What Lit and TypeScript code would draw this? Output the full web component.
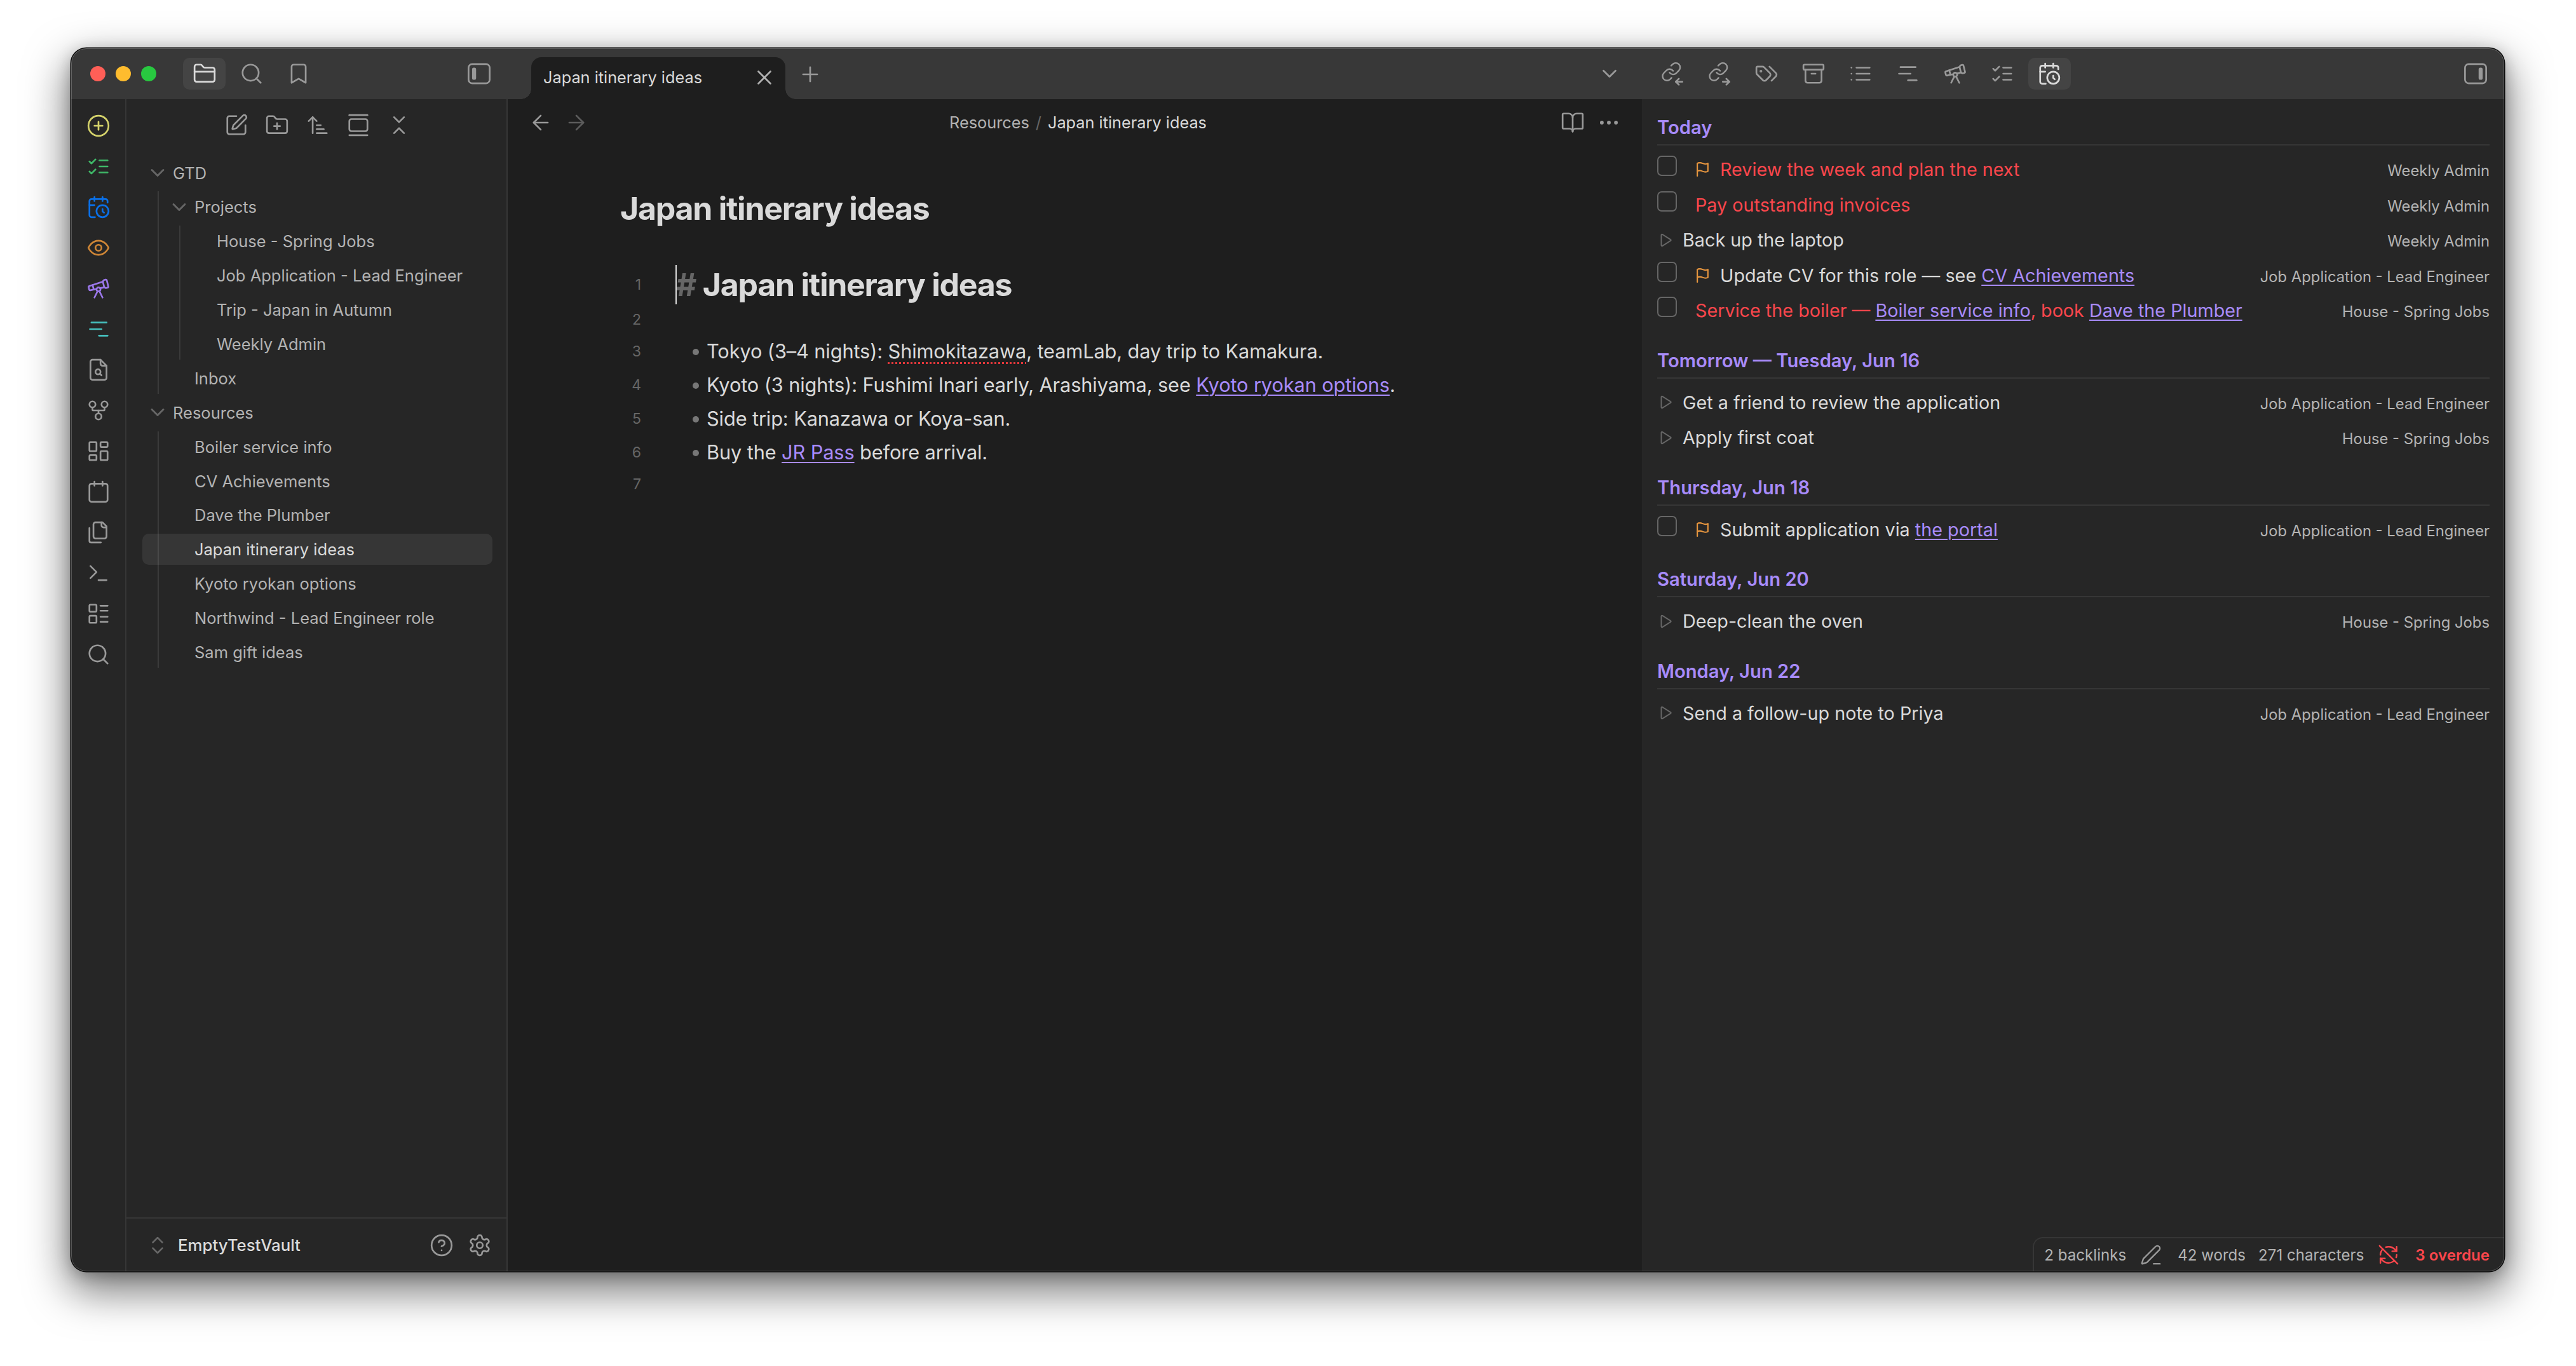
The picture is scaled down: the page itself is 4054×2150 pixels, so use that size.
import { LitElement, html, css, svg } from "lit";
import { customElement } from "lit/decorators.js";

const ICONS: Record<string, any> = {
  folder: svg`<path d="M20 20a2 2 0 0 0 2-2V8a2 2 0 0 0-2-2h-7.9a2 2 0 0 1-1.69-.9L9.6 3.9A2 2 0 0 0 7.93 3H4a2 2 0 0 0-2 2v13a2 2 0 0 0 2 2Z"/><path d="M2 10h20"/>`,
  search: svg`<circle cx="11" cy="11" r="8"/><path d="m21 21-4.3-4.3"/>`,
  bookmark: svg`<path d="m19 21-7-4-7 4V5a2 2 0 0 1 2-2h10a2 2 0 0 1 2 2v16z"/>`,
  sideLeft: svg`<rect x="1.500" y="2.500" width="21" height="19" rx="3.500"/><rect x="5" y="6" width="4" height="12" rx="1.600" fill="currentColor" stroke="none"/>`,
  sideRight: svg`<rect x="1.500" y="2.500" width="21" height="19" rx="3.500"/><rect x="15" y="6" width="4" height="12" rx="1.600" fill="currentColor" stroke="none"/>`,
  edit: svg`<path d="M12 3H5a2 2 0 0 0-2 2v14a2 2 0 0 0 2 2h14a2 2 0 0 0 2-2v-7"/><path d="M18.375 2.625a1 1 0 0 1 3 3l-9.013 9.014a2 2 0 0 1-.853.505l-2.873.84a.5.5 0 0 1-.62-.62l.84-2.873a2 2 0 0 1 .506-.852z"/>`,
  folderPlus: svg`<path d="M12 10v6"/><path d="M9 13h6"/><path d="M20 20a2 2 0 0 0 2-2V8a2 2 0 0 0-2-2h-7.9a2 2 0 0 1-1.69-.9L9.6 3.9A2 2 0 0 0 7.93 3H4a2 2 0 0 0-2 2v13a2 2 0 0 0 2 2Z"/>`,
  sort: svg`<path d="m3 8 4-4 4 4"/><path d="M7 4v16"/><path d="M11 12h4"/><path d="M11 16h7"/><path d="M11 20h10"/>`,
  gallery: svg`<path d="M3 2h18"/><rect width="18" height="12" x="3" y="6" rx="2"/><path d="M3 22h18"/>`,
  collapse: svg`<path d="m7 20 5-5 5 5"/><path d="m7 4 5 5 5-5"/>`,
  circlePlus: svg`<circle cx="12" cy="12" r="10"/><path d="M8 12h8"/><path d="M12 8v8"/>`,
  listChecks: svg`<path d="m3 17 2 2 4-4"/><path d="m3 7 2 2 4-4"/><path d="M13 6h8"/><path d="M13 12h8"/><path d="M13 18h8"/>`,
  calClock: svg`<path d="M21 7.5V6a2 2 0 0 0-2-2H5a2 2 0 0 0-2 2v14a2 2 0 0 0 2 2h3.5"/><path d="M16 2v4"/><path d="M8 2v4"/><path d="M3 10h5"/><path d="M17.5 17.5 16 16.3V14"/><circle cx="16" cy="16" r="6"/>`,
  eye: svg`<path d="M2 12s3-7 10-7 10 7 10 7-3 7-10 7-10-7-10-7Z"/><circle cx="12" cy="12" r="3"/>`,
  telescope: svg`<path d="m10.065 12.493-6.18 1.318a.934.934 0 0 1-1.108-.702l-.537-2.15a1.07 1.07 0 0 1 .691-1.265l13.504-4.44"/><path d="m13.56 11.747 4.332-.924"/><path d="m16 21-3.105-6.21"/><path d="M16.485 5.94a2 2 0 0 1 1.455-2.425l1.09-.272a1 1 0 0 1 1.212.727l1.515 6.06a1 1 0 0 1-.727 1.213l-1.09.272a2 2 0 0 1-2.425-1.455z"/><path d="m6.158 8.633 1.114 4.456"/><path d="m8 21 3.105-6.21"/><circle cx="12" cy="13" r="2"/>`,
  outline: svg`<path d="M5 5.5h15"/><path d="M3.5 12H15"/><path d="M12.500 18.500H21"/>`,
  fileSearch: svg`<path d="M6 22a2 2 0 0 1-2-2V4a2 2 0 0 1 2-2h8l6 6v12a2 2 0 0 1-2 2Z"/><path d="M14 2v4a2 2 0 0 0 2 2h4"/><circle cx="11.500" cy="14" r="2.500"/><path d="m13.500 16 1.500 1.500"/>`,
  fork: svg`<circle cx="12" cy="18" r="3"/><circle cx="6" cy="6" r="3"/><circle cx="18" cy="6" r="3"/><path d="M18 9v2c0 .6-.4 1-1 1H7c-.6 0-1-.4-1-1V9"/><path d="M12 12v3"/>`,
  dashboard: svg`<rect width="7" height="9" x="3" y="3" rx="1"/><rect width="7" height="5" x="14" y="3" rx="1"/><rect width="7" height="9" x="14" y="12" rx="1"/><rect width="7" height="5" x="3" y="16" rx="1"/>`,
  calendar: svg`<path d="M8 2v4"/><path d="M16 2v4"/><rect width="18" height="18" x="3" y="4" rx="2"/>`,
  files: svg`<path d="M20 7h-3a2 2 0 0 1-2-2V2"/><path d="M9 18a2 2 0 0 1-2-2V4a2 2 0 0 1 2-2h7l4 4v10a2 2 0 0 1-2 2Z"/><path d="M3 7.600v12.800A1.600 1.600 0 0 0 4.600 22h9.800"/>`,
  terminal: svg`<path d="M12 19h8"/><path d="m4 17 6-6-6-6"/>`,
  layoutList: svg`<rect width="7" height="7" x="3" y="3" rx="1"/><rect width="7" height="7" x="3" y="14" rx="1"/><path d="M14 4h7"/><path d="M14 9h7"/><path d="M14 15h7"/><path d="M14 20h7"/>`,
  chevron: svg`<path d="m6 9 6 6 6-6"/>`,
  x: svg`<path d="M18 6 6 18"/><path d="m6 6 12 12"/>`,
  plus: svg`<path d="M5 12h14"/><path d="M12 5v14"/>`,
  back: svg`<path d="m12 19-7-7 7-7"/><path d="M19 12H5"/>`,
  forward: svg`<path d="M5 12h14"/><path d="m12 5 7 7-7 7"/>`,
  book: svg`<path d="M12 7v14"/><path d="M3 18a1 1 0 0 1-1-1V4a1 1 0 0 1 1-1h5a4 4 0 0 1 4 4 4 4 0 0 1 4-4h5a1 1 0 0 1 1 1v13a1 1 0 0 1-1 1h-6a3 3 0 0 0-3 3 3 3 0 0 0-3-3z"/>`,
  more: svg`<circle cx="12" cy="12" r="1" fill="currentColor"/><circle cx="19" cy="12" r="1" fill="currentColor"/><circle cx="5" cy="12" r="1" fill="currentColor"/>`,
  linkIn: svg`<g transform="translate(1 -.5) scale(.88)"><path d="M10 13a5 5 0 0 0 7.540.540l3-3a5 5 0 0 0-7.070-7.070l-1.720 1.710"/><path d="M14 11a5 5 0 0 0-7.540-.540l-3 3a5 5 0 0 0 7.070 7.070l1.710-1.710"/></g><path d="M22.500 20h-6.500"/><path d="m19 17-3 3 3 3"/>`,
  linkOut: svg`<g transform="translate(1 -.5) scale(.88)"><path d="M10 13a5 5 0 0 0 7.540.540l3-3a5 5 0 0 0-7.070-7.070l-1.720 1.710"/><path d="M14 11a5 5 0 0 0-7.540-.540l-3 3a5 5 0 0 0 7.070 7.070l1.710-1.710"/></g><path d="M16 20h6.500"/><path d="m19.500 17 3 3-3 3"/>`,
  tags: svg`<path d="m15 5 6.300 6.300a2.400 2.400 0 0 1 0 3.400L17 19"/><path d="M9.586 5.586A2 2 0 0 0 8.172 5H3a1 1 0 0 0-1 1v5.172a2 2 0 0 0 .586 1.414L8.290 18.290a2.426 2.426 0 0 0 3.420 0l3.580-3.580a2.426 2.426 0 0 0 0-3.420z"/><circle cx="6.500" cy="9.500" r=".5" fill="currentColor"/>`,
  archive: svg`<rect width="20" height="5" x="2" y="3" rx="1"/><path d="M4 8v11a2 2 0 0 0 2 2h12a2 2 0 0 0 2-2V8"/><path d="M10 12h4"/>`,
  list: svg`<path d="M3 12h.01"/><path d="M3 18h.01"/><path d="M3 6h.01"/><path d="M8 12h13"/><path d="M8 18h13"/><path d="M8 6h13"/>`,
  help: svg`<circle cx="12" cy="12" r="10"/><path d="M9.090 9a3 3 0 0 1 5.830 1c0 2-3 3-3 3"/><path d="M12 17h.01"/>`,
  gear: svg`<path d="M12.220 2h-.44a2 2 0 0 0-2 2v.18a2 2 0 0 1-1 1.730l-.43.25a2 2 0 0 1-2 0l-.15-.08a2 2 0 0 0-2.730.73l-.22.38a2 2 0 0 0 .73 2.730l.15.1a2 2 0 0 1 1 1.720v.51a2 2 0 0 1-1 1.740l-.15.09a2 2 0 0 0-.73 2.730l.22.38a2 2 0 0 0 2.730.73l.15-.08a2 2 0 0 1 2 0l.43.25a2 2 0 0 1 1 1.730V20a2 2 0 0 0 2 2h.44a2 2 0 0 0 2-2v-.18a2 2 0 0 1 1-1.730l.43-.25a2 2 0 0 1 2 0l.15.08a2 2 0 0 0 2.730-.73l.22-.39a2 2 0 0 0-.73-2.730l-.15-.08a2 2 0 0 1-1-1.740v-.5a2 2 0 0 1 1-1.740l.15-.09a2 2 0 0 0 .73-2.730l-.22-.38a2 2 0 0 0-2.730-.73l-.15.08a2 2 0 0 1-2 0l-.43-.25a2 2 0 0 1-1-1.730V4a2 2 0 0 0-2-2z"/><circle cx="12" cy="12" r="3"/>`,
  upDown: svg`<path d="m7 15 5 5 5-5"/><path d="m7 9 5-5 5 5"/>`,
  pencil: svg`<path d="M21.174 6.812a1 1 0 0 0-3.986-3.987L3.842 16.174a2 2 0 0 0-.5.830l-1.321 4.352a.5.5 0 0 0 .623.622l4.353-1.320a2 2 0 0 0 .830-.497z"/><path d="M15 22h7"/>`,
  syncOff: svg`<path d="M21 8L18.740 5.740A9.750 9.750 0 0 0 12 3C11 3 10.030 3.160 9.130 3.470"/><path d="M8 16H3v5"/><path d="M3 12C3 9.510 4 7.260 5.640 5.640"/><path d="m3 16 2.260 2.260A9.750 9.750 0 0 0 12 21c2.490 0 4.740-1 6.360-2.640"/><path d="M21 12c0 1-.16 1.970-.47 2.870"/><path d="M21 3v5h-5"/><path d="M22 22 2 2"/>`,
  flag: svg`<path d="M4 15s1-1 4-1 5 2 8 2 4-1 4-1V3s-1 1-4 1-5-2-8-2-4 1-4 1z"/><path d="M4 22v-7"/>`,
  play: svg`<path d="M6 4.500a1 1 0 0 1 1.500-.87l12 7.500a1 1 0 0 1 0 1.740l-12 7.500A1 1 0 0 1 6 19.500z"/>`,
};

const icon = (name: string, cls = "") =>
  html`<svg class="i ${cls}" viewBox="0 0 24 24" aria-hidden="true">${ICONS[name]}</svg>`;

type Part = string | { link: string };
interface Task { kind: "box" | "play"; flag?: boolean; red?: boolean; parts: Part[]; meta: string; }
interface Section { head: string; tasks: Task[]; }

const JOB = "Job Application - Lead Engineer";
const HOUSE = "House - Spring Jobs";
const ADMIN = "Weekly Admin";

const SECTIONS: Section[] = [
  { head: "Today", tasks: [
    { kind: "box", flag: true, red: true, parts: ["Review the week and plan the next"], meta: ADMIN },
    { kind: "box", red: true, parts: ["Pay outstanding invoices"], meta: ADMIN },
    { kind: "play", parts: ["Back up the laptop"], meta: ADMIN },
    { kind: "box", flag: true, parts: ["Update CV for this role — see ", { link: "CV Achievements" }], meta: JOB },
    { kind: "box", red: true, parts: ["Service the boiler — ", { link: "Boiler service info" }, ", book ", { link: "Dave the Plumber" }], meta: HOUSE },
  ]},
  { head: "Tomorrow — Tuesday, Jun 16", tasks: [
    { kind: "play", parts: ["Get a friend to review the application"], meta: JOB },
    { kind: "play", parts: ["Apply first coat"], meta: HOUSE },
  ]},
  { head: "Thursday, Jun 18", tasks: [
    { kind: "box", flag: true, parts: ["Submit application via ", { link: "the portal" }], meta: JOB },
  ]},
  { head: "Saturday, Jun 20", tasks: [
    { kind: "play", parts: ["Deep-clean the oven"], meta: HOUSE },
  ]},
  { head: "Monday, Jun 22", tasks: [
    { kind: "play", parts: ["Send a follow-up note to Priya"], meta: JOB },
  ]},
];

const RIBBON: [string, string][] = [
  ["circlePlus", "yellow"], ["listChecks", "green"], ["calClock", "blue"], ["eye", "orange"],
  ["telescope", "purple"], ["outline", "cyan"], ["fileSearch", ""], ["fork", ""], ["dashboard", ""],
  ["calendar", ""], ["files", ""], ["terminal", ""], ["layoutList", ""], ["search", ""],
];

const RIGHT_ICONS = ["linkIn", "linkOut", "tags", "archive", "list", "outline", "telescope", "listChecks", "calClock"];

@customElement("app-root")
export class AppRoot extends LitElement {
  static styles = css`
    :host {
      display: block;
      width: 4054px;
      height: 2150px;
      box-sizing: border-box;
      padding: 76px 113px 149px 112px;
      background: #fff;
      font-family: Inter, "Liberation Sans", sans-serif;
      color: #dadada;
    }
    * { box-sizing: border-box; }
    .window {
      position: relative;
      width: 3829px;
      height: 1925px;
      border-radius: 24px;
      overflow: hidden;
      background: #262626;
      display: flex;
      flex-direction: column;
      box-shadow: 0 0 0 1.5px #0c0c0c, 0 26px 66px 6px rgba(0, 0, 0, 0.52), 0 6px 24px rgba(0, 0, 0, 0.25);
    }
    .window::after {
      content: "";
      position: absolute;
      inset: 0;
      border-radius: 24px;
      border: 1.5px solid rgba(255, 255, 255, 0.22);
      pointer-events: none;
    }
    .i {
      width: 38px;
      height: 38px;
      fill: none;
      stroke: currentColor;
      stroke-width: 1.7;
      stroke-linecap: round;
      stroke-linejoin: round;
      flex: none;
      display: block;
    }
    .btn {
      width: 67px;
      height: 50px;
      border-radius: 10px;
      display: flex;
      align-items: center;
      justify-content: center;
      color: #999;
      flex: none;
    }
    .btn.on { background: #444; color: #dadada; }

    /* title bar */
    .titlebar {
      height: 80px;
      flex: none;
      background: #383838;
      display: grid;
      grid-template-columns: 724px 1748px 1357px;
    }
    .tb-left { display: flex; align-items: center; padding-left: 30px; }
    .lights { display: flex; gap: 16px; margin-right: 42px; }
    .light { width: 24px; height: 24px; border-radius: 50%; }
    .red { background: #ff5f57; }
    .amber { background: #febc2e; }
    .grn { background: #28c840; }
    .tab-btns { display: flex; gap: 7px; margin-right: 217px; }
    .tb-mid { display: flex; align-items: flex-end; }
    .tab {
      position: relative;
      width: 400px;
      height: 66px;
      background: #1e1e1e;
      border-radius: 16px 16px 0 0;
      display: flex;
      align-items: center;
      padding: 0 14px 3px 19px;
      font-size: 25.3px;
      color: #dadada;
    }
    .tab::before, .tab::after {
      content: "";
      position: absolute;
      bottom: 0;
      width: 16px;
      height: 16px;
    }
    .tab::before { left: -16px; background: radial-gradient(circle at 0 0, transparent 15.5px, #1e1e1e 16px); }
    .tab::after { right: -16px; background: radial-gradient(circle at 100% 0, transparent 15.5px, #1e1e1e 16px); }
    .tab span { flex: 1; }
    .tab .i { color: #b3b3b3; }
    .plus { align-self: center; margin-left: 5px; margin-top: 2px; }
    .chev { align-self: center; margin-left: auto; margin-right: 18px; }
    .tb-right { display: flex; align-items: center; gap: 7.3px; padding: 0 11.5px 0 13.5px; }
    .tb-right .last { margin-left: auto; }

    /* body */
    .body {
      flex: 1;
      min-height: 0;
      display: grid;
      grid-template-columns: 87px 600px 1785px 1357px;
    }
    .ribbon {
      background: #262626;
      border-right: 2px solid #363636;
      display: flex;
      flex-direction: column;
      align-items: center;
      gap: 26px;
      padding-top: 23px;
      color: #999;
    }
    .yellow { color: #d5d36b; }
    .green { color: #3fb868; }
    .blue { color: #0a70e8; }
    .orange { color: #cf8636; }
    .purple { color: #9a77e8; }
    .cyan { color: #46bfbd; }

    /* sidebar */
    .sidebar {
      background: #262626;
      border-right: 2px solid #363636;
      display: flex;
      flex-direction: column;
      min-height: 0;
    }
    .side-head {
      height: 91.5px;
      flex: none;
      display: flex;
      justify-content: center;
      gap: 14px;
      padding: 16px 0 0 3px;
    }
    .side-head .btn { width: 50px; }
    .tree {
      flex: 1;
      display: flex;
      flex-direction: column;
      gap: 4.9px;
      padding: 0 22px 0 25px;
      font-size: 25.5px;
      color: #b3b3b3;
    }
    .children { position: relative; display: flex; flex-direction: column; gap: 4.9px; }
    .children::before {
      content: "";
      position: absolute;
      top: 0;
      bottom: 0;
      left: 24px;
      width: 2px;
      background: #3a3a3a;
    }
    .children.deep::before { left: 58px; }
    .row {
      position: relative;
      height: 49px;
      border-radius: 10px;
      display: flex;
      align-items: center;
    }
    .d0 { padding-left: 48px; }
    .d1 { padding-left: 82px; }
    .d2 { padding-left: 117px; }
    .row.active { background: rgba(255, 255, 255, 0.075); color: #dadada; }
    .row .i {
      position: absolute;
      color: #666;
      width: 36px;
      height: 36px;
      stroke-width: 1.9;
    }
    .row.d0 .i { left: 6px; }
    .row.d1 .i { left: 40px; }
    .vault {
      height: 85px;
      flex: none;
      border-top: 2px solid #363636;
      display: flex;
      align-items: center;
      color: #999;
      padding-right: 23px;
    }
    .vault .up { width: 36px; height: 36px; color: #666; margin-left: 31px; }
    .vault b { font-weight: 500; font-size: 25.8px; color: #dadada; margin-left: 14px; flex: 1; }
    .vault .i + b + .i { margin-right: 22px; }

    /* editor */
    .editor { background: #1e1e1e; min-width: 0; }
    .nav {
      height: 74px;
      display: grid;
      grid-template-columns: 1fr auto 1fr;
      align-items: center;
      padding: 0 33px;
    }
    .nav-l, .nav-r { display: flex; align-items: center; }
    .nav-l { gap: 18px; color: #999; }
    .nav-l .dim { color: #5c5c5c; }
    .nav-r { justify-content: flex-end; gap: 19px; color: #999; }
    .crumbs { font-size: 25.3px; color: #b3b3b3; display: flex; gap: 10px; padding: 0 0 2px 10px; }
    .crumbs i { font-style: normal; color: #666; }
    .crumbs span:last-child { color: #dadada; }
    .title {
      height: 60px;
      margin: 68px 0 59px 177px;
      font-size: 50px;
      line-height: 60px;
      font-weight: 700;
      letter-spacing: -0.025em;
      color: #dadada;
    }
    .line { position: relative; display: flex; align-items: center; font-size: 30.75px; height: 53px; }
    .line.blank { height: 47px; }
    .line.h1 { height: 62px; }
    .num { width: 210px; text-align: right; font-size: 23px; color: #666; flex: none; }
    .txt { margin-left: 55px; white-space: pre; letter-spacing: -0.004em; }
    .h1 .txt { font-size: 50px; font-weight: 700; letter-spacing: -0.025em; }
    .hash { color: #666; }
    .caret {
      position: absolute;
      left: 264px;
      top: 0;
      width: 2px;
      height: 62px;
      background: #dadada;
    }
    .bullet {
      display: inline-block;
      width: 10px;
      height: 10px;
      border-radius: 50%;
      background: #777;
      margin: 0 12px 5px 26px;
    }
    a { color: #a88bfa; text-decoration: underline; text-decoration-thickness: 2px; text-underline-offset: 4px; }
    .spell { text-decoration: underline dotted #e5383b 3px; text-underline-offset: 6px; }

    /* right panel */
    .right { position: relative; background: #262626; padding: 0 23px 0 24px; min-width: 0; }
    .sec { padding-top: 32px; }
    .sec:first-child { padding-top: 26px; }
    .sec h3 {
      margin: 0 0 10px;
      height: 47px;
      padding-bottom: 7px;
      border-bottom: 2px solid #363636;
      font-size: 29.2px;
      line-height: 38px;
      font-weight: 600;
      color: #a88bfa;
    }
    .task { height: 55.5px; display: flex; align-items: center; font-size: 28.75px; }
    .task.late { color: #fb464c; }
    .check {
      width: 31px;
      height: 32px;
      border: 2px solid #666;
      border-radius: 7px;
      align-self: flex-start;
      margin: 6px 29px 0 0;
      flex: none;
    }
    .flag { width: 25px; height: 25px; stroke-width: 2; color: #e9973f; margin: 0 15px 0 -1px; }
    .tri { width: 26px; height: 26px; stroke-width: 1.8; color: #666; margin: 0 14px 0 0; }
    .meta { margin-left: auto; font-size: 23.8px; color: #b3b3b3; padding-top: 4px; }
    .status {
      position: absolute;
      right: 0;
      bottom: 0;
      height: 54px;
      display: flex;
      align-items: center;
      background: #262626;
      border: solid #363636;
      border-width: 2px 0 0 2px;
      border-top-left-radius: 16px;
      padding: 0 23px 0 16px;
      font-size: 24.1px;
      color: #b3b3b3;
    }
    .status .i { width: 34px; height: 34px; }
    .status .pen { color: #999; margin: 0 25px 0 22px; }
    .status .off { color: #fb464c; margin: 0 25px 0 22px; }
    .status .gap { margin-left: 20px; }
    .status b { font-weight: 600; color: #fb464c; }
  `;

  private treeRow(text: string, depth: number, folder = false, active = false) {
    return html`<div class="row d${depth} ${active ? "active" : ""}">
      ${folder ? icon("chevron") : ""}${text}
    </div>`;
  }

  private renderTask(t: Task) {
    return html`<div class="task ${t.red ? "late" : ""}">
      ${t.kind === "box" ? html`<div class="check"></div>` : icon("play", "tri")}
      ${t.flag ? icon("flag", "flag") : ""}
      <span>${t.parts.map((p) => (typeof p === "string" ? p : html`<a>${p.link}</a>`))}</span>
      <span class="meta">${t.meta}</span>
    </div>`;
  }

  render() {
    return html`<div class="window">
      <div class="titlebar">
        <div class="tb-left">
          <div class="lights">
            <div class="light red"></div><div class="light amber"></div><div class="light grn"></div>
          </div>
          <div class="tab-btns">
            <div class="btn on">${icon("folder")}</div>
            <div class="btn">${icon("search")}</div>
            <div class="btn">${icon("bookmark")}</div>
          </div>
          <div class="btn">${icon("sideLeft")}</div>
        </div>
        <div class="tb-mid">
          <div class="tab"><span>Japan itinerary ideas</span>${icon("x")}</div>
          <div class="btn plus">${icon("plus")}</div>
          <div class="btn chev">${icon("chevron")}</div>
        </div>
        <div class="tb-right">
          ${RIGHT_ICONS.map((n, i) => html`<div class="btn ${i === 8 ? "on" : ""}">${icon(n)}</div>`)}
          <div class="btn last">${icon("sideRight")}</div>
        </div>
      </div>

      <div class="body">
        <div class="ribbon">${RIBBON.map(([n, c]) => icon(n, c))}</div>

        <div class="sidebar">
          <div class="side-head">
            ${["edit", "folderPlus", "sort", "gallery", "collapse"].map((n) => html`<div class="btn">${icon(n)}</div>`)}
          </div>
          <div class="tree">
            ${this.treeRow("GTD", 0, true)}
            <div class="children">
              ${this.treeRow("Projects", 1, true)}
              <div class="children deep">
                ${["House - Spring Jobs", JOB, "Trip - Japan in Autumn", "Weekly Admin"].map((t) => this.treeRow(t, 2))}
              </div>
              ${this.treeRow("Inbox", 1)}
            </div>
            ${this.treeRow("Resources", 0, true)}
            <div class="children">
              ${["Boiler service info", "CV Achievements", "Dave the Plumber"].map((t) => this.treeRow(t, 1))}
              ${this.treeRow("Japan itinerary ideas", 1, false, true)}
              ${["Kyoto ryokan options", "Northwind - Lead Engineer role", "Sam gift ideas"].map((t) => this.treeRow(t, 1))}
            </div>
          </div>
          <div class="vault">
            ${icon("upDown", "up")}<b>EmptyTestVault</b>${icon("help")}${icon("gear")}
          </div>
        </div>

        <div class="editor">
          <div class="nav">
            <div class="nav-l">${icon("back")}${icon("forward", "dim")}</div>
            <div class="crumbs"><span>Resources</span><i>/</i><span>Japan itinerary ideas</span></div>
            <div class="nav-r">${icon("book")}${icon("more")}</div>
          </div>
          <div class="title">Japan itinerary ideas</div>
          <div class="line h1">
            <span class="num">1</span><span class="caret"></span>
            <span class="txt"><span class="hash">#</span> Japan itinerary ideas</span>
          </div>
          <div class="line blank"><span class="num">2</span></div>
          <div class="line"><span class="num">3</span><span class="txt"><span class="bullet"></span>Tokyo (3–4 nights): <span class="spell">Shimokitazawa</span>, teamLab, day trip to Kamakura.</span></div>
          <div class="line"><span class="num">4</span><span class="txt"><span class="bullet"></span>Kyoto (3 nights): Fushimi Inari early, Arashiyama, see <a>Kyoto ryokan options</a>.</span></div>
          <div class="line"><span class="num">5</span><span class="txt"><span class="bullet"></span>Side trip: Kanazawa or Koya-san.</span></div>
          <div class="line"><span class="num">6</span><span class="txt"><span class="bullet"></span>Buy the <a>JR Pass</a> before arrival.</span></div>
          <div class="line blank"><span class="num">7</span></div>
        </div>

        <div class="right">
          ${SECTIONS.map((s) => html`<div class="sec"><h3>${s.head}</h3>${s.tasks.map((t) => this.renderTask(t))}</div>`)}
          <div class="status">
            <span>2 backlinks</span>
            ${icon("pencil", "pen")}
            <span>42 words</span><span class="gap">271 characters</span>
            ${icon("syncOff", "off")}
            <b>3 overdue</b>
          </div>
        </div>
      </div>
    </div>`;
  }
}
